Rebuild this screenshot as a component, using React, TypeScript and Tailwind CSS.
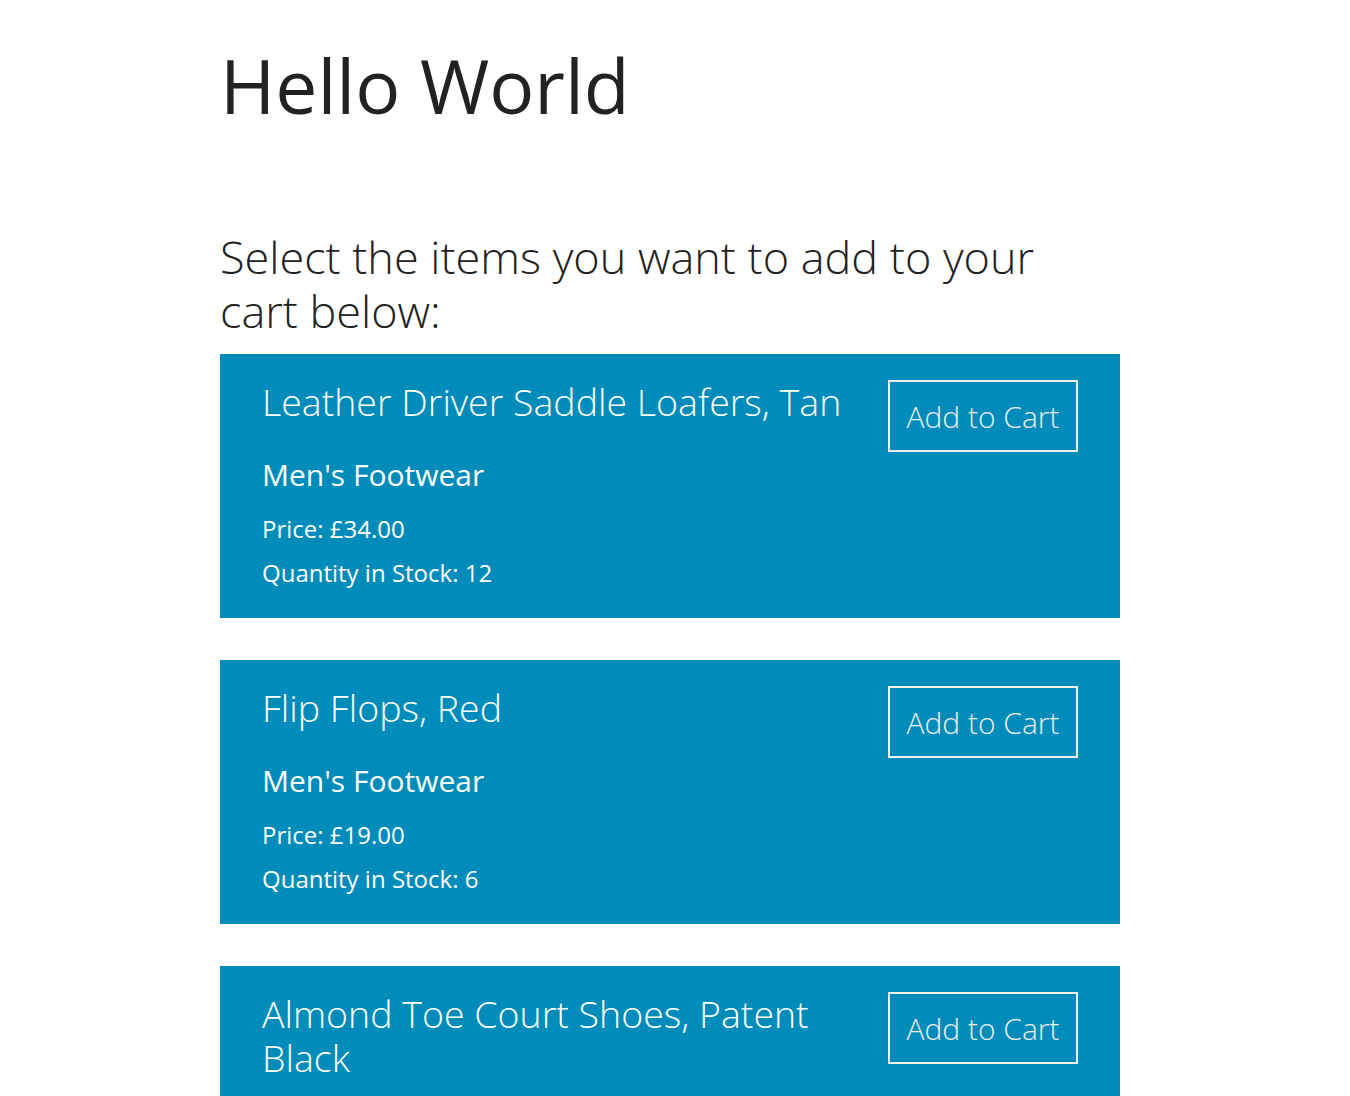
const products = [
  { name: "Leather Driver Saddle Loafers, Tan", category: "Men's Footwear", price: "£34.00", stock: 12 },
  { name: "Flip Flops, Red", category: "Men's Footwear", price: "£19.00", stock: 6 },
  { name: "Almond Toe Court Shoes, Patent Black", category: "Women's Footwear", price: "£99.00", stock: 5 },
];

function ProductCard({ product }: { product: (typeof products)[number] }) {
  return (
    <div className="flex bg-[#008cba] px-[42px] pt-[26px] pb-[23px] text-white">
      <div className="flex min-w-0 flex-1 flex-col pr-6">
        <h3 className="text-[37.5px] leading-[44px] font-light">{product.name}</h3>
        <h4 className="mt-[33px] text-[30px] leading-[36px] font-medium">{product.category}</h4>
        <p className="mt-[14px] text-[24px] leading-[44px]">Price: {product.price}</p>
        <p className="text-[24px] leading-[44px]">Quantity in Stock: {product.stock}</p>
      </div>
      <div className="shrink-0">
        <button className="h-[72px] w-[190px] border-2 border-[#eeeeee] text-[30px] font-light text-[#eeeeee]">
          Add to Cart
        </button>
      </div>
    </div>
  );
}

export default function App() {
  return (
    <div className="min-h-screen bg-white font-['Open_Sans',sans-serif] text-[#222222]">
      <div className="ml-[220px] w-[900px] pt-[30px]">
        <h1 className="text-[75px] leading-[110px] font-normal">Hello World</h1>
        <h2 className="mt-[90px] max-w-[840px] text-[45px] leading-[54px] font-light">
          Select the items you want to add to your cart below:
        </h2>
        <div className="mt-[16px] flex flex-col gap-[42px]">
          {products.map((p) => (
            <ProductCard key={p.name} product={p} />
          ))}
        </div>
      </div>
    </div>
  );
}
